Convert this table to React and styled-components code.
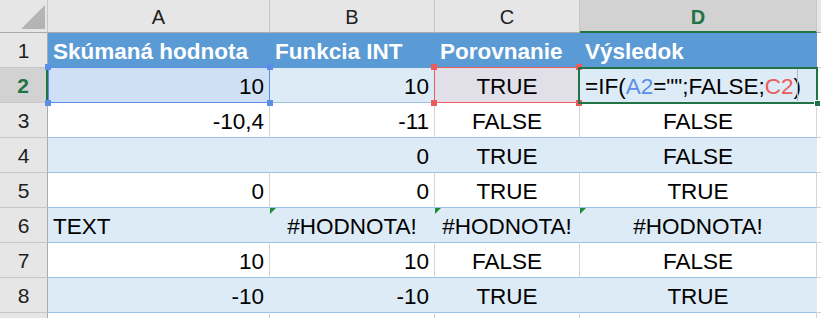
import styled, { createGlobalStyle } from 'styled-components'

const Global = createGlobalStyle`
  body { margin: 0; background: #fff; }
`

const Sheet = styled.div`
  display: grid;
  grid-template-columns: 48px 222px 165px 145px 237px 1fr;
  grid-template-rows: 33px repeat(9, 35px);
  width: 821px;
  height: 318px;
  overflow: hidden;
  font-family: "Liberation Sans", Arial, sans-serif;
`

const Corner = styled.div`
  position: relative;
  background: #e6e6e6;
  border-right: 1px solid #c6c6c6;
  border-bottom: 1px solid #ababab;
  svg { position: absolute; right: 2px; bottom: 3px; }
`

const ColHead = styled.div`
  display: flex;
  align-items: center;
  justify-content: center;
  padding-top: 3px;
  box-sizing: border-box;
  background: ${p => (p.$active ? '#d2d2d2' : '#e6e6e6')};
  color: ${p => (p.$active ? '#217346' : '#1e1e1e')};
  font-weight: ${p => (p.$active ? 700 : 400)};
  font-size: 20px;
  border-right: 1px solid #c6c6c6;
  border-bottom: ${p => (p.$active ? '2px solid #217346' : '1px solid #ababab')};
`

const RowHead = styled.div`
  display: flex;
  align-items: center;
  justify-content: center;
  box-sizing: border-box;
  padding-top: 2px;
  background: ${p => (p.$active ? '#d2d2d2' : '#e6e6e6')};
  color: ${p => (p.$active ? '#217346' : '#1e1e1e')};
  font-weight: ${p => (p.$active ? 700 : 400)};
  font-size: 21px;
  border-bottom: 1px solid #c6c6c6;
  border-right: ${p => (p.$active ? '2px solid #217346' : '1px solid #ababab')};
`

const fills = {
  head: '#5b9bd5',
  band: '#ddebf7',
  plain: '#ffffff',
  range: '#cfe0f5',
  ref: '#e1dfe7',
  none: '#ffffff',
}

const Cell = styled.div`
  position: relative;
  box-sizing: border-box;
  padding: 2px 5px 0;
  line-height: 34px;
  font-size: 22.5px;
  white-space: nowrap;
  text-align: ${p => p.$align};
  background: ${p => fills[p.$fill]};
  color: ${p => (p.$fill === 'head' ? '#fff' : '#000')};
  font-weight: ${p => (p.$fill === 'head' ? 700 : 400)};
  border-right: 1px solid
    ${p => (p.$fill === 'plain' || p.$fill === 'none' ? '#d4d4d4' : fills[p.$fill])};
  border-bottom: 1px solid
    ${p => (p.$fill === 'none' ? '#d4d4d4' : p.$fill === 'head' ? fills.head : '#9bc2e6')};
`

const RefBox = styled.div`
  position: absolute;
  top: -1px;
  bottom: -1px;
  left: ${p => p.$left};
  right: ${p => p.$right};
  border: 1px solid ${p => p.$color};
  pointer-events: none;
  z-index: 2;
`

const Handle = styled.span`
  position: absolute;
  width: 6px;
  height: 6px;
  background: ${p => p.$color};
  ${p => (p.$top ? 'top: -4px;' : 'bottom: -4px;')}
  ${p => (p.$start ? 'left: -4px;' : 'right: -4px;')}
`

const ActiveBox = styled.div`
  position: absolute;
  top: -1px;
  left: -2px;
  right: -2px;
  bottom: -2px;
  border: 2px solid #217346;
  pointer-events: none;
  z-index: 3;
`

const FillHandle = styled.span`
  position: absolute;
  right: -5px;
  bottom: -5px;
  width: 5px;
  height: 5px;
  background: #217346;
  border: 1px solid #fff;
`

const EditEdge = styled.span`
  position: absolute;
  left: 217px;
  top: 1px;
  bottom: 1px;
  width: 1px;
  background: #b8b8b8;
`

const ErrorMark = styled.span`
  position: absolute;
  top: 0;
  left: 0;
  width: 0;
  height: 0;
  border-top: 6px solid #1f8a3a;
  border-right: 6px solid transparent;
`

const Ref = styled.span`
  color: ${p => p.$color};
`

const BLUE = '#5b8ee8'
const RED = '#ec5c5c'

const Corners = ({ color }) => (
  <>
    <Handle $color={color} $top $start />
    <Handle $color={color} $top />
    <Handle $color={color} $start />
    <Handle $color={color} />
  </>
)

const formula = (
  <>
    =IF(<Ref $color={BLUE}>A2</Ref>="";FALSE;<Ref $color={RED}>C2</Ref>)
  </>
)

const rows = [
  ['head', [['Skúmaná hodnota', 'left'], ['Funkcia INT', 'left'], ['Porovnanie', 'left'], ['Výsledok', 'left']]],
  ['band', [['10', 'right'], ['10', 'right'], ['TRUE', 'center'], [formula, 'left']]],
  ['plain', [['-10,4', 'right'], ['-11', 'right'], ['FALSE', 'center'], ['FALSE', 'center']]],
  ['band', [['', 'right'], ['0', 'right'], ['TRUE', 'center'], ['FALSE', 'center']]],
  ['plain', [['0', 'right'], ['0', 'right'], ['TRUE', 'center'], ['TRUE', 'center']]],
  ['band', [['TEXT', 'left'], ['#HODNOTA!', 'center', true], ['#HODNOTA!', 'center', true], ['#HODNOTA!', 'center', true]]],
  ['plain', [['10', 'right'], ['10', 'right'], ['FALSE', 'center'], ['FALSE', 'center']]],
  ['band', [['-10', 'right'], ['-10', 'right'], ['TRUE', 'center'], ['TRUE', 'center']]],
  ['none', [['', 'left'], ['', 'left'], ['', 'left'], ['', 'left']]],
]

function overlay(r, c) {
  if (r !== 1) return null
  if (c === 0)
    return (
      <RefBox $color={BLUE} $left="0" $right="-1px">
        <Corners color={BLUE} />
      </RefBox>
    )
  if (c === 2)
    return (
      <RefBox $color={RED} $left="-1px" $right="0">
        <Corners color={RED} />
      </RefBox>
    )
  if (c === 3)
    return (
      <>
        <EditEdge />
        <ActiveBox>
          <FillHandle />
        </ActiveBox>
      </>
    )
  return null
}

function fillFor(kind, r, c) {
  if (r === 1 && c === 0) return 'range'
  if (r === 1 && c === 2) return 'ref'
  return kind
}

function Row({ n, kind, cells, r }) {
  // the last row is only a sliver, its number falls below the fold
  return (
    <>
      <RowHead $active={n === 2}>{kind === 'none' ? '' : n}</RowHead>
      {cells.map(([v, align, err], c) => (
        <Cell key={c} $align={align} $fill={fillFor(kind, r, c)}>
          {err && <ErrorMark />}
          {v}
          {overlay(r, c)}
        </Cell>
      ))}
      <Cell $align="left" $fill="none" />
    </>
  )
}

export default function App() {
  return (
    <>
      <Global />
      <Sheet>
        <Corner>
          <svg width="24" height="24" viewBox="0 0 24 24">
            <polygon points="24,0 24,24 0,24" fill="#b4b4b4" />
          </svg>
        </Corner>
        {['A', 'B', 'C', 'D'].map(l => (
          <ColHead key={l} $active={l === 'D'}>{l}</ColHead>
        ))}
        <ColHead />
        {rows.map(([kind, cells], r) => (
          <Row key={r} n={r + 1} kind={kind} cells={cells} r={r} />
        ))}
      </Sheet>
    </>
  )
}
